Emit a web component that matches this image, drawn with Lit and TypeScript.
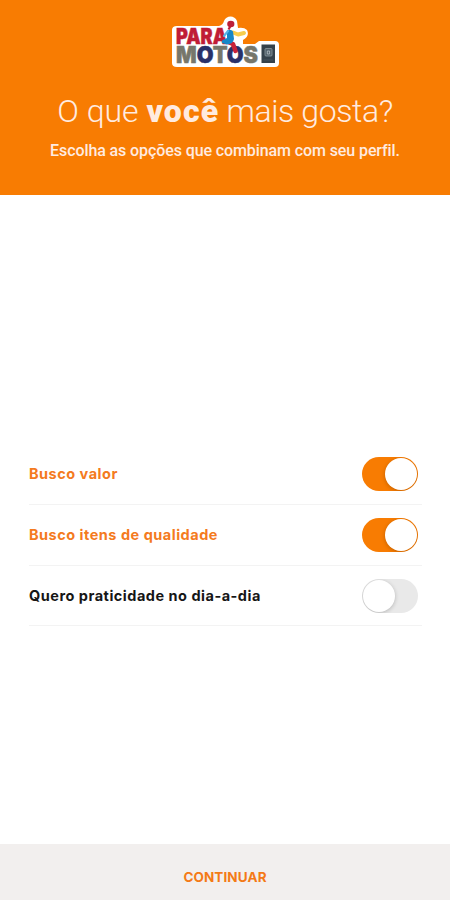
import { LitElement, html, svg, css } from "lit";
import { customElement, property, state } from "lit/decorators.js";

@customElement("brand-logo")
class BrandLogo extends LitElement {
  static styles = css`
    :host { display: block; width: 120px; height: 66px; }
    svg { display: block; }
    .word { font-family: Inter, "Liberation Sans", sans-serif; font-weight: 900; stroke-width: 0.5; }
    .red { fill: #c01c36; stroke: #c01c36; }
    .grey { fill: #77776b; stroke: #77776b; }
    .navy { fill: #293169; stroke: #293169; }
  `;
  render() {
    return html`<svg width="120" height="66" viewBox="0 0 120 66" role="img" aria-label="Para Motos">
      <path fill="#fff" d="M12 18H54Q58 17 59 13C61 7 70 7 72 13L73 20Q79 19 82 22Q85 28 78 32V36H90L94 33H110Q114 33 114 37V55Q114 59 110 59H12Q7 59 7 55V22Q7 18 12 18Z"/>
      ${svg`<text class="word red" x="11" y="36.2" font-size="21" textLength="51" lengthAdjust="spacingAndGlyphs">PARA</text>
      <text class="word grey" x="11" y="55" font-size="22.5" textLength="82" lengthAdjust="spacingAndGlyphs">M<tspan class="navy">O</tspan>T<tspan class="navy">O</tspan>S</text>`}
      <path d="M68 24.5L73 26.5L79 25" fill="none" stroke="#f6cd4e" stroke-width="4" stroke-linecap="round" stroke-linejoin="round"/>
      <path d="M63 34L68 36L70.5 43" fill="none" stroke="#c92238" stroke-width="4.5" stroke-linecap="round" stroke-linejoin="round"/>
      <path d="M62 22.5Q66 20.5 68 23.5L69 31Q68 36 62 36.5L57 35Q56 32 59 31.5L62 30Z" fill="#1687c8"/>
      <path d="M63 23L59 28" fill="none" stroke="#55b5e6" stroke-width="2.2" stroke-linecap="round"/>
      <ellipse cx="65.8" cy="16" rx="3.6" ry="3.2" fill="#bd1e38"/>
      <path d="M65.5 18L63.5 21.5" fill="none" stroke="#bd1e38" stroke-width="2.2"/>
      <rect x="96.5" y="36.5" width="13.5" height="18.5" fill="#35424b"/>
      <rect x="100" y="40.5" width="7" height="7.5" rx="1" fill="#52616b" stroke="#8c999f" stroke-width=".8"/>
      <path d="M102.3 43h2.3v3h-2.3z" fill="none" stroke="#c4cdd1" stroke-width=".7"/>
      <path d="M98.5 52H108" stroke="#4a5962" stroke-width=".8"/>
    </svg>`;
  }
}

@customElement("toggle-switch")
class ToggleSwitch extends LitElement {
  @property({ type: Boolean, reflect: true }) on = false;
  static styles = css`
    :host { display: flex; box-sizing: border-box; width: 56px; height: 34px; padding: 1px; border-radius: 17px; background: #e9e9e9; overflow: hidden; }
    :host([on]) { background: #f87c02; justify-content: flex-end; }
    .knob { width: 32px; height: 32px; border-radius: 50%; background: #fff; box-shadow: 0 1px 4px rgba(0, 0, 0, 0.22); }
  `;
  render() {
    return html`<span class="knob"></span>`;
  }
}

@customElement("app-root")
class AppRoot extends LitElement {
  @state() options = [
    { label: "Busco valor", on: true },
    { label: "Busco itens de qualidade", on: true },
    { label: "Quero praticidade no dia-a-dia", on: false },
  ];
  static styles = css`
    :host { display: flex; flex-direction: column; height: 900px; background: #fff; font-family: Roboto, sans-serif; }
    header { box-sizing: border-box; height: 195px; padding-top: 8px; background: #f87c02; color: #ffebe0; display: flex; flex-direction: column; align-items: center; }
    h1 { margin: 18px 0 0; font-size: 32px; line-height: 38px; font-weight: 300; white-space: nowrap; letter-spacing: -0.4px; }
    h1 b { font-weight: 900; letter-spacing: 1.1px; }
    h1 .lead { letter-spacing: 0; }
    p { margin: 11px 0 0; font-size: 16px; line-height: 20px; font-weight: 500; white-space: nowrap; letter-spacing: -0.1px; }
    main { flex: 1; padding: 249px 28px 0 29px; }
    .row { box-sizing: border-box; height: 61px; display: flex; align-items: center; justify-content: space-between; padding-right: 4px; border-bottom: 1px solid #f3f3f3; color: #161616; font-family: Inter, sans-serif; font-size: 14.5px; line-height: 18px; font-weight: 700; letter-spacing: 0.5px; white-space: nowrap; }
    .row:nth-child(3) { height: 60px; }
    .row.on { color: #f47a20; }
    footer { box-sizing: border-box; height: 56px; padding-top: 10px; background: #f2efee; color: #f47a16; display: flex; align-items: center; justify-content: center; font-family: Inter, sans-serif; font-size: 13.5px; font-weight: 700; letter-spacing: 0.1px; }
  `;
  toggle(i: number) {
    this.options = this.options.map((o, n) => (n === i ? { ...o, on: !o.on } : o));
  }
  render() {
    return html`
      <header>
        <brand-logo></brand-logo>
        <h1><span class="lead">O que </span><b>você</b> mais gosta?</h1>
        <p>Escolha as opções que combinam com seu perfil.</p>
      </header>
      <main>
        ${this.options.map((o, i) => html`<div class="row ${o.on ? "on" : ""}" @click=${() => this.toggle(i)}>
          <span>${o.label}</span><toggle-switch ?on=${o.on}></toggle-switch>
        </div>`)}
      </main>
      <footer>CONTINUAR</footer>
    `;
  }
}
